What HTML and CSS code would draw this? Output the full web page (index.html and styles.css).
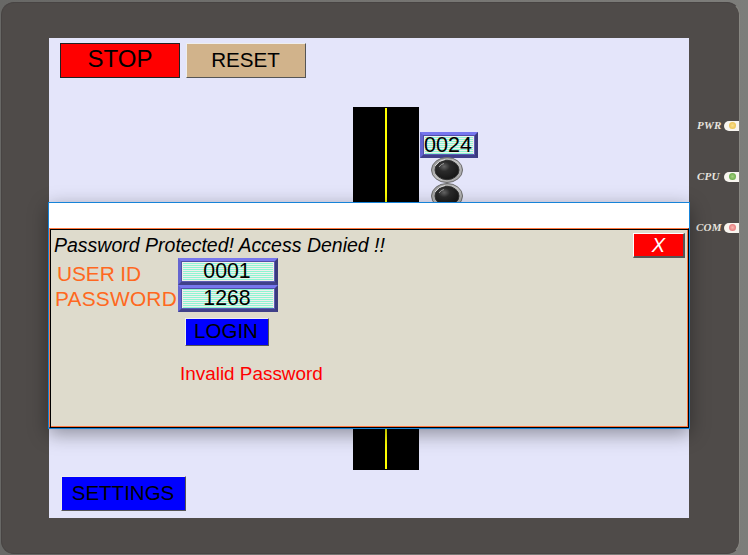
FILE: index.html
```html
<!DOCTYPE html>
<html lang="en">
<head>
<meta charset="utf-8">
<title>HMI Panel</title>
<link rel="stylesheet" href="styles.css">
</head>
<body>
<div class="panel">
  <main class="screen">
    <div class="toolbar">
      <button class="btn stop">STOP</button>
      <button class="btn reset">RESET</button>
    </div>
    <div class="scene">
      <div class="road"><div class="lane"></div></div>
      <div class="signals">
        <div class="display odd counter"><span>0024</span></div>
        <svg class="lamps" width="34" height="56" viewBox="0 0 34 56">
          <defs>
            <radialGradient id="glass" cx=".38" cy=".32" r=".7">
              <stop offset="0" stop-color="#666"/>
              <stop offset=".35" stop-color="#2b2b2b"/>
              <stop offset="1" stop-color="#151515"/>
            </radialGradient>
            <linearGradient id="rim" x1="0" y1="0" x2="1" y2="1">
              <stop offset="0" stop-color="#888"/>
              <stop offset=".5" stop-color="#c4c4c4"/>
              <stop offset="1" stop-color="#999"/>
            </linearGradient>
            <g id="lamp">
              <ellipse cx="17" cy="13" rx="15.5" ry="12.5" fill="url(#rim)" stroke="#6a6a6a" stroke-width="1"/>
              <ellipse cx="17" cy="13" rx="12" ry="9.7" fill="url(#glass)" stroke="#333" stroke-width="1"/>
              <path d="M5 9Q9 3 15 2.5" fill="none" stroke="#ddd" stroke-width="1"/>
              <path d="M9 10Q11 7 14 6.5" fill="none" stroke="#999" stroke-width="1"/>
            </g>
          </defs>
          <use href="#lamp"/>
          <use href="#lamp" y="26"/>
        </svg>
      </div>
    </div>
    <button class="btn settings">SETTINGS</button>
    <section class="dialog">
      <div class="titlebar"></div>
      <div class="content">
        <header class="head">
          <span class="message">Password Protected! Access Denied !!</span>
          <button class="close">X</button>
        </header>
        <div class="form">
          <span class="label user">USER ID</span>
          <div class="display odd"><span>0001</span></div>
          <span class="label">PASSWORD</span>
          <div class="display"><span>1268</span></div>
        </div>
        <button class="btn login">LOGIN</button>
        <p class="error">Invalid Password</p>
      </div>
    </section>
  </main>
  <aside class="leds">
    <div class="led"><span>PWR</span><i class="lens"><b class="yellow"></b></i></div>
    <div class="led"><span>CPU</span><i class="lens"><b class="green"></b></i></div>
    <div class="led"><span>COM</span><i class="lens"><b class="red"></b></i></div>
  </aside>
</div>
</body>
</html>
```
FILE: styles.css
```css
* { box-sizing: border-box; }
body {
  margin: 0;
  width: 748px;
  height: 555px;
  overflow: hidden;
  padding: 2px 8px 1px 1px;
  background: linear-gradient(90deg, #686866, #777673 60%, #7d7d7a);
  font-family: "Liberation Sans", Arial, sans-serif;
  color: #000;
}
button { font-family: inherit; color: inherit; margin: 0; padding: 0; border-radius: 0; }
.panel {
  display: flex;
  width: 739px;
  height: 552px;
  padding: 35px 0 0 47px;
  background: #4f4b49;
  border: 1px solid #484443;
  border-right-color: #888782;
  border-radius: 13px;
}
.screen {
  position: relative;
  flex: none;
  width: 640px;
  height: 480px;
  background: #e4e5fa;
}
.toolbar { display: flex; gap: 6px; padding: 5px 0 0 11px; height: 69px; }
.btn {
  display: block;
  height: 35px;
  border: 1px solid #eee;
  border-right-color: #555;
  border-bottom-color: #555;
}
.stop { width: 120px; background: #f00; border-color: #222; font-size: 24px; line-height: 29px; padding-bottom: 4px; }
.reset { width: 120px; background: #d1b38b; font-size: 20.6px; line-height: 31px; padding: 0 1px 2px 0; }
.settings { width: 125px; margin: 6px 0 0 12px; background: #00f; font-size: 20.5px; line-height: 31px; padding: 0 1px 2px 0; }
.scene { display: flex; gap: 1px; height: 363px; padding-left: 304px; }
.road { display: flex; justify-content: center; width: 66px; padding: 1px 0; background: #000; }
.lane { width: 2px; background: #ff0; }
.signals { width: 58px; padding-top: 25px; }
.lamps { display: block; margin: -1px 0 0 10px; }
.display {
  width: 100px;
  height: 27px;
  border: 3px solid;
  border-color: #7676ee #3a3a7c #40408a #6464d0;
  box-shadow: inset 1px 1px #5050a8, inset -1px -1px #5a5ab4, inset 2px 0 #eeeeea, inset -2px 0 #eeeeea;
  background: repeating-linear-gradient(#f0f0ec 0 1px, #8df5d2 1px 2px);
  font-size: 21.3px;
  line-height: 20px;
  text-align: center;
  white-space: nowrap;
}
.odd { background: repeating-linear-gradient(#8df5d2 0 1px, #f0f0ec 1px 2px); }
.display span { display: block; margin-left: -2px; }
.counter { width: 58px; height: 26px; font-size: 21.6px; line-height: 19px; }
.counter span { margin: 0 -1px 0 -3px; }
.dialog {
  position: absolute;
  left: -1px;
  top: 164px;
  width: 642px;
  height: 227px;
  border: 1px solid #1683d8;
  background: #fff;
  box-shadow: 0 5px 18px rgba(0, 0, 0, .38);
}
.titlebar { height: 25px; }
.content {
  height: 200px;
  border: 1px solid #ff7840;
  border-right-color: #000;
  border-bottom-color: #000;
  box-shadow: inset 1px 1px #000, inset -1px -1px #ff7840;
  background: #dedbcc;
}
.head { display: flex; justify-content: space-between; height: 29px; padding: 4px 3px 0 4px; }
.message { font-size: 19.5px; font-style: italic; line-height: 24px; white-space: nowrap; }
.close {
  width: 52px;
  height: 25px;
  border: 1px solid #fff;
  border-right: 2px solid #555;
  border-bottom: 2px solid #555;
  background: #f00;
  color: #fff;
  font-size: 20px;
  font-style: italic;
  line-height: 22px;
}
.form { display: grid; grid-template-columns: 123px 100px; grid-template-rows: 27px 27px; padding-left: 5px; }
.label { color: #ff6820; font-size: 20.9px; letter-spacing: .2px; line-height: 28px; white-space: nowrap; }
.user { padding-left: 2px; letter-spacing: -.1px; line-height: 31px; }
.login { width: 84px; height: 28px; margin: 6px 0 0 135px; background: #00f; font-size: 20.5px; line-height: 24px; padding: 0 2px 2px 0; }
.error { margin: 16px 0 0 130px; color: #f00; font-size: 18.9px; line-height: 24px; }
.leds { display: flex; flex-direction: column; gap: 40px; width: 50px; padding: 82px 0 0 8px; }
.led {
  display: flex;
  align-items: center;
  justify-content: space-between;
  height: 11px;
  color: #e7e4df;
  font: italic bold 11px/11px "Liberation Serif", serif;
}
.led span { letter-spacing: .2px; }
.led:nth-child(3) span { margin-left: -1px; }
.lens { display: flex; align-items: center; justify-content: center; width: 15px; height: 10px; border-radius: 7px 0 0 7px; background: #f8f5ef; }
.lens b { width: 7px; height: 7px; border-radius: 50%; margin-left: 1px; }
.yellow { background: radial-gradient(#f8e090, #e8b93c); }
.green { background: radial-gradient(#a5d080, #58a038); }
.red { background: radial-gradient(#f7b8b0, #e0636a); }
```
